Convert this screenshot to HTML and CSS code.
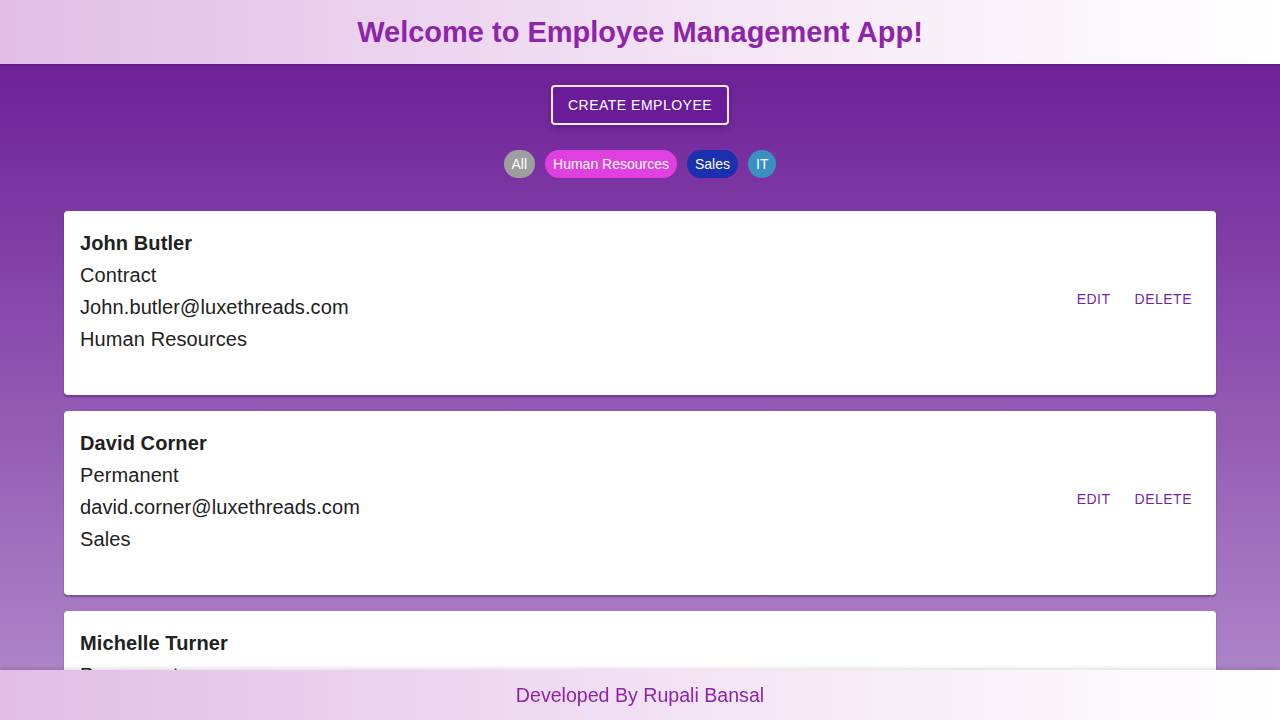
FILE: index.html
```html
<!DOCTYPE html>
<html>
<head>
<meta charset="utf-8">
<link rel="stylesheet" href="styles.css">
</head>
<body>
<header class="app-header">
  <h1 class="title">Welcome to Employee Management App!</h1>
</header>
<main class="main">
  <div class="toolbar">
    <button class="create-btn">CREATE EMPLOYEE</button>
  </div>
  <div class="chips">
    <span class="chip chip-all">All</span>
    <span class="chip chip-hr">Human Resources</span>
    <span class="chip chip-sales">Sales</span>
    <span class="chip chip-it">IT</span>
  </div>
  <div class="cards">
    <div class="card">
      <div class="card-content">
        <div class="name">John Butler</div>
        <div class="line">Contract</div>
        <div class="line">John.butler@luxethreads.com</div>
        <div class="line">Human Resources</div>
      </div>
      <div class="card-actions">
        <button class="text-btn">EDIT</button>
        <button class="text-btn">DELETE</button>
      </div>
    </div>
    <div class="card">
      <div class="card-content">
        <div class="name">David Corner</div>
        <div class="line">Permanent</div>
        <div class="line">david.corner@luxethreads.com</div>
        <div class="line">Sales</div>
      </div>
      <div class="card-actions">
        <button class="text-btn">EDIT</button>
        <button class="text-btn">DELETE</button>
      </div>
    </div>
    <div class="card">
      <div class="card-content">
        <div class="name">Michelle Turner</div>
        <div class="line">Permanent</div>
        <div class="line">michelle.turner@luxethreads.com</div>
        <div class="line">IT</div>
      </div>
      <div class="card-actions">
        <button class="text-btn">EDIT</button>
        <button class="text-btn">DELETE</button>
      </div>
    </div>
  </div>
</main>
<footer class="app-footer">Developed By Rupali Bansal</footer>
</body>
</html>
```
FILE: styles.css
```css
* { box-sizing: border-box; }
html, body {
  margin: 0;
  padding: 0;
  height: 720px;
  overflow: hidden;
  font-family: "Liberation Sans", Arial, sans-serif;
}
.app-header {
  height: 64px;
  display: flex;
  align-items: center;
  justify-content: center;
  padding-top: 1px;
  background: linear-gradient(90deg, #e1bde6 0%, #f5e8f6 60%, #ffffff 100%);
  box-shadow: 0 1px 2px rgba(80, 20, 110, 0.5);
  position: relative;
  z-index: 2;
}
.title {
  margin: 0;
  font-size: 29px;
  font-weight: 700;
  color: #8e24aa;
}
.main {
  height: 656px;
  overflow: hidden;
  background: linear-gradient(180deg, #6e2198 0%, #b28ccb 100%);
  padding-top: 21px;
}
.toolbar {
  display: flex;
  justify-content: center;
}
.create-btn {
  height: 40px;
  width: 178px;
  background: #6a1b9a;
  border: 2px solid #f3e8f8;
  border-radius: 4px;
  color: #ffffff;
  font-family: "Liberation Sans", Arial, sans-serif;
  font-size: 14px;
  letter-spacing: 0.5px;
  box-shadow: 0 3px 6px rgba(40, 0, 60, 0.3);
}
.chips {
  display: flex;
  justify-content: center;
  gap: 10px;
  margin-top: 25px;
}
.chip {
  height: 28px;
  padding: 0 8px;
  border-radius: 14px;
  display: inline-flex;
  align-items: center;
  color: #ffffff;
  font-size: 14px;
}
.chip-all { background: #9e9e9e; }
.chip-hr { background: #e040e0; }
.chip-sales { background: #1a30ae; }
.chip-it { background: #3a90be; }
.cards {
  margin-top: 33px;
  padding: 0 64px;
  display: flex;
  flex-direction: column;
  gap: 16px;
}
.card {
  height: 184px;
  flex-shrink: 0;
  background: #ffffff;
  border-radius: 4px;
  box-shadow: 0 2px 2px rgba(40, 0, 60, 0.35);
  display: flex;
  align-items: center;
  justify-content: space-between;
}
.card-content {
  align-self: flex-start;
  padding: 16px;
  color: #212121;
  font-size: 20px;
  line-height: 32px;
  letter-spacing: 0.1px;
}
.name { font-weight: 700; }
.card-actions {
  display: flex;
  gap: 8px;
  padding: 0 16px 8px 8px;
}
.text-btn {
  background: none;
  border: none;
  padding: 6px 8px;
  color: #7b1fa2;
  font-family: "Liberation Sans", Arial, sans-serif;
  font-size: 14px;
  letter-spacing: 0.5px;
}
.app-footer {
  position: fixed;
  left: 0;
  right: 0;
  bottom: 0;
  height: 50px;
  padding-top: 1px;
  display: flex;
  align-items: center;
  justify-content: center;
  background: linear-gradient(90deg, #e1bde6 0%, #f5e8f6 60%, #ffffff 100%);
  box-shadow: 0 -2px 4px rgba(0, 0, 0, 0.12);
  color: #8e24aa;
  font-size: 19.6px;
}
```
